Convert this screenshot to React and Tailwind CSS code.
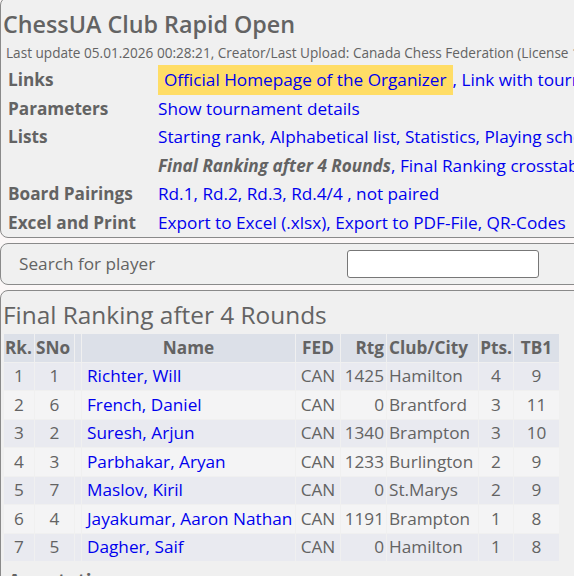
import React from "react";

const players = [
  [1, 1, "Richter, Will", "CAN", 1425, "Hamilton", 4, 9],
  [2, 6, "French, Daniel", "CAN", 0, "Brantford", 3, 11],
  [3, 2, "Suresh, Arjun", "CAN", 1340, "Brampton", 3, 10],
  [4, 3, "Parbhakar, Aryan", "CAN", 1233, "Burlington", 2, 9],
  [5, 7, "Maslov, Kiril", "CAN", 0, "St.Marys", 2, 9],
  [6, 4, "Jayakumar, Aaron Nathan", "CAN", 1191, "Brampton", 1, 8],
  [7, 5, "Dagher, Saif", "CAN", 0, "Hamilton", 1, 8],
];

function Row({ label, children }) {
  return (
    <div className="flex h-[28.5px] items-center whitespace-nowrap">
      <div className="w-[150px] shrink-0 font-bold">{label}</div>
      <div className="flex items-center">{children}</div>
    </div>
  );
}

const L = "text-[#0000ee]";

export default function App() {
  return (
    <div
      className="w-[574px] h-[576px] overflow-hidden bg-[#fbf7f7] text-[#636363]"
      style={{ fontFamily: '"Open Sans", "Noto Sans", sans-serif' }}
    >
      <div className="w-[760px]">
        <div className="-mt-[3px] rounded-[8px] border border-[#8a8a8a] bg-[#f0f0f0] text-[17.2px]">
          <div className="h-[42px] flex items-end pl-[2px] pb-[4px] text-[23.3px] font-semibold leading-none">
            ChessUA Club Rapid Open
          </div>
          <div className="h-[26px] flex items-center pl-[5px] text-[13.6px] whitespace-nowrap">
            Last update 05.01.2026 00:28:21, Creator/Last Upload: Canada Chess Federation (License 1234)
          </div>
          <div className="pl-[7px]">
            <Row label="Links">
              <span className={`bg-[#ffdd66] h-[30px] flex items-center px-[6px] ${L}`}>
                Official Homepage of the Organizer
              </span>
              <span className={L}>, Link with tournament calendar</span>
            </Row>
            <Row label="Parameters">
              <span className={L}>Show tournament details</span>
            </Row>
            <Row label="Lists">
              <span className={L}>Starting rank, Alphabetical list, Statistics, Playing schedule</span>
            </Row>
            <Row label="">
              <span className="font-bold italic">Final Ranking after 4 Rounds</span>
              <span className={L}>, Final Ranking crosstable after 4 Rounds</span>
            </Row>
            <Row label="Board Pairings">
              <span className={L}>Rd.1, Rd.2, Rd.3, Rd.4/4 , not paired</span>
            </Row>
            <Row label="Excel and Print">
              <span className={L}>Export to Excel (.xlsx), Export to PDF-File, QR-Codes</span>
            </Row>
          </div>
        </div>

        <div className="mt-[5px] h-[42px] rounded-[8px] border border-[#8a8a8a] bg-[#f0f0f0] flex items-center text-[17.2px]">
          <div className="w-[346px] pl-[18px]">Search for player</div>
          <div className="w-[192px] h-[28px] rounded-[3px] border border-[#777] bg-white"></div>
        </div>

        <div className="mt-[5px] rounded-[8px] border border-[#8a8a8a] bg-[#f0f0f0] text-[17.2px]">
          <div className="h-[42px] flex items-end pl-[2px] pb-[6px] text-[24.4px] leading-none">
            Final Ranking after 4 Rounds
          </div>
          <table className="ml-[2px] table-fixed border-separate border-spacing-[1px] whitespace-nowrap">
            <colgroup>
              <col className="w-[30px]" />
              <col className="w-[39px]" />
              <col className="w-[6px]" />
              <col className="w-[213px]" />
              <col className="w-[44px]" />
              <col className="w-[45px]" />
              <col className="w-[91px]" />
              <col className="w-[34px]" />
              <col className="w-[45px]" />
            </colgroup>
            <thead>
              <tr className="bg-[#dce0e8] font-bold h-[27.5px]">
                <th className="text-left pl-[1px] p-0">Rk.</th>
                <th className="text-left pl-[1px] p-0">SNo</th>
                <th className="p-0"></th>
                <th className="text-center p-0">Name</th>
                <th className="text-center p-0">FED</th>
                <th className="text-right pr-[2px] p-0">Rtg</th>
                <th className="text-left pl-[2px] p-0">Club/City</th>
                <th className="text-center p-0">Pts.</th>
                <th className="text-center p-0">TB1</th>
              </tr>
            </thead>
            <tbody>
              {players.map((p, i) => (
                <tr
                  key={p[0]}
                  className={`h-[27.5px] ${i % 2 === 0 ? "bg-[#e9eaf0]" : "bg-[#f4f4f5]"}`}
                >
                  <td className="text-center p-0">{p[0]}</td>
                  <td className="text-center p-0">{p[1]}</td>
                  <td className="p-0"></td>
                  <td className={`pl-[5px] p-0 ${L}`}>{p[2]}</td>
                  <td className="text-center p-0">{p[3]}</td>
                  <td className="text-right pr-[2px] p-0">{p[4]}</td>
                  <td className="pl-[2px] p-0">{p[5]}</td>
                  <td className="text-center p-0">{p[6]}</td>
                  <td className="text-center p-0">{p[7]}</td>
                </tr>
              ))}
            </tbody>
          </table>
          <div className="h-[10px]"></div>
          <div className="pl-[7px] text-[19px] font-bold leading-none">Annotation:</div>
        </div>
      </div>
    </div>
  );
}
